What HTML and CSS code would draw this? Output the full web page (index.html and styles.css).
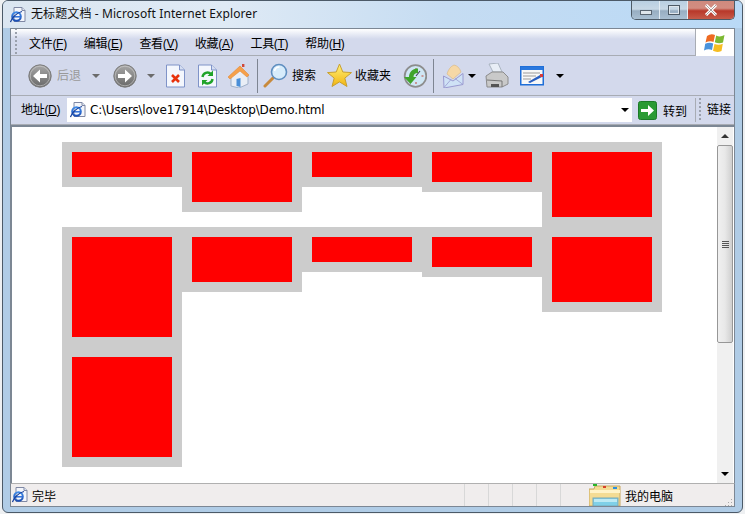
FILE: index.html
```html
<!DOCTYPE html>
<html lang="zh-CN">
<head>
  <meta charset="UTF-8" />
  <title>无标题文档 - Microsoft Internet Explorer</title>
  <link rel="stylesheet" href="styles.css">
</head>
<body>
  <svg class="defs" width="0" height="0">
    <defs>
      <linearGradient id="ball" x1="0" y1="0" x2="0" y2="1">
        <stop offset="0" stop-color="#a8a8a8"/><stop offset="1" stop-color="#686868"/>
      </linearGradient>
      <linearGradient id="iefill" x1="0" y1="0" x2="0" y2="1">
        <stop offset="0" stop-color="#3f8be8"/><stop offset="1" stop-color="#1c4fb4"/>
      </linearGradient>
      <symbol id="pageie" viewBox="0 0 16 16">
        <path d="M4 .5h8l3 3v11H4z" fill="#f4f6fb" stroke="#7f88a4"/>
        <path d="M12 .5v3h3" fill="#dfe5f2" stroke="#7f88a4"/>
        <circle cx="6.500" cy="9.500" r="4.300" fill="none" stroke="url(#iefill)" stroke-width="2"/>
        <path d="M2 9.800h9" stroke="#2f6fd8" stroke-width="1.500"/>
        <path d="M.5 15C1.500 11 7 5.500 12 4.500" fill="none" stroke="#17419c" stroke-width="1.200"/>
      </symbol>
      <symbol id="caret" viewBox="0 0 8 4"><path d="M0 0h8L4 4z"/></symbol>
      <symbol id="navball" viewBox="0 0 24 24">
        <circle cx="12" cy="12" r="11.200" fill="url(#ball)" stroke="#7c7c7c"/>
        <circle cx="12" cy="12" r="9.800" fill="none" stroke="#d0d0d0" stroke-opacity=".6"/>
      </symbol>
    </defs>
  </svg>

  <div class="window">
    <div class="titlebar">
      <svg class="title-icon" width="16" height="16"><use href="#pageie"/></svg>
      <span class="title-text">无标题文档 - Microsoft Internet Explorer</span>
      <div class="caption-btns">
        <div class="cap-btn cap-min"><i></i></div>
        <div class="cap-btn cap-max"><i></i></div>
        <div class="cap-btn cap-close">
          <svg width="14" height="12" viewBox="0 0 14 12"><path d="M2 1l10 10M12 1L2 11" stroke="#fff" stroke-width="3"/><path d="M2 1l10 10M12 1L2 11" stroke="#6b5a58" stroke-width=".6"/></svg>
        </div>
      </div>
    </div>

    <div class="chrome">
      <div class="menubar">
        <div class="menu-items">
          <span>文件(<u>F</u>)</span>
          <span>编辑(<u>E</u>)</span>
          <span>查看(<u>V</u>)</span>
          <span>收藏(<u>A</u>)</span>
          <span>工具(<u>T</u>)</span>
          <span>帮助(<u>H</u>)</span>
        </div>
        <div class="logo-cell">
          <svg width="22" height="20" viewBox="0 0 22 20">
            <path d="M3 3Q7 0 11 2L9.500 9Q6 7.500 1.500 9.500z" fill="#ee6a22"/>
            <path d="M12.200 2.500Q16 4.500 20.500 2L19 9.500Q15 11 10.800 9.300z" fill="#7cb932"/>
            <path d="M1.200 10.800Q5.500 8.800 9.200 10.500L8 17Q4 15.500 0 17.500z" fill="#4a93dc"/>
            <path d="M10.500 11Q15 12.500 18.800 10.800L17.500 18Q13 20 9 17.800z" fill="#f6bd22"/>
          </svg>
        </div>
      </div>

      <div class="toolbar">
        <svg class="tb-back" width="24" height="24" viewBox="0 0 24 24"><use href="#navball"/><path d="M19 10h-7V5.500L5 12l7 6.500V14h7z" fill="#fff"/></svg>
        <span class="tb-label tb-dim">后退</span>
        <svg class="tb-caret tb-caret-grey" width="8" height="4"><use href="#caret"/></svg>
        <svg class="tb-fwd" width="24" height="24" viewBox="0 0 24 24"><use href="#navball"/><path d="M5 10h7V5.500l7 6.500-7 6.500V14H5z" fill="#fff"/></svg>
        <svg class="tb-caret tb-caret-grey tb-caret-fwd" width="8" height="4"><use href="#caret"/></svg>

        <svg class="tb-stop" width="19" height="24" viewBox="0 0 19 24">
          <path d="M.5 1h13l5 5v17H.5z" fill="#f4f7fd" stroke="#7f93c8"/><path d="M13.500 1v5h5" fill="#d5def2" stroke="#7f93c8"/>
          <path d="M6 11l7 7M13 11l-7 7" stroke="#e8320c" stroke-width="2.600"/>
        </svg>
        <svg class="tb-refresh" width="19" height="24" viewBox="0 0 19 24">
          <path d="M.5 1h13l5 5v17H.5z" fill="#f4f7fd" stroke="#7f93c8"/><path d="M13.500 1v5h5" fill="#d5def2" stroke="#7f93c8"/>
          <path d="M4.500 13a5 5 0 0 1 8.500-3" fill="none" stroke="#1fa32a" stroke-width="2.400"/><path d="M15 6.500V12H9.500z" fill="#1fa32a"/>
          <path d="M14.500 15a5 5 0 0 1-8.500 3" fill="none" stroke="#1fa32a" stroke-width="2.400"/><path d="M4 21.500V16h5.500z" fill="#1fa32a"/>
        </svg>
        <svg class="tb-home" width="24" height="24" viewBox="0 0 24 24">
          <path d="M4 12v10l8 2 9-4v-9l-8-6z" fill="#e9eef6" stroke="#9fb0c8"/>
          <path d="M1 13L13 2l9 9-2 2-7-6-10 8z" fill="#f6a04a" stroke="#e08a38" stroke-width=".6"/>
          <rect x="15" y="0" width="2.400" height="3" fill="#d0483a"/>
          <path d="M9.500 15l4-1v9l-4-1z" fill="#4a8fd8"/>
        </svg>
        <span class="tb-sep"></span>
        <svg class="tb-search" width="25" height="25" viewBox="0 0 25 25">
          <path d="M2 23l8-8" stroke="#c88a3c" stroke-width="3" stroke-linecap="round"/>
          <circle cx="16" cy="9" r="7.500" fill="#d7ecfb" stroke="#5f8fc0" stroke-width="1.600"/>
          <path d="M11.500 8a5 5 0 0 1 5-4" fill="none" stroke="#fff" stroke-width="1.500"/>
        </svg>
        <span class="tb-label tb-search-label">搜索</span>
        <svg class="tb-star" width="25" height="25" viewBox="0 0 25 25">
          <defs><linearGradient id="star" x1="0" y1="0" x2="0" y2="1"><stop offset="0" stop-color="#fff27a"/><stop offset="1" stop-color="#f2b410"/></linearGradient></defs>
          <path d="M12.500 1l3.300 8 8.700.6-6.700 5.500 2.200 8.400-7.500-4.600-7.500 4.600 2.200-8.400L.5 9.600 9.200 9z" fill="url(#star)" stroke="#c8a030"/>
        </svg>
        <span class="tb-label tb-star-label">收藏夹</span>
        <svg class="tb-history" width="24" height="24" viewBox="0 0 24 24">
          <circle cx="12.500" cy="12" r="10.800" fill="#cfe6f4" stroke="#8d8d8d" stroke-width="1.800"/>
          <path d="M13 4v2M20.500 12h-2M13 20v-2" stroke="#c0483a"/>
          <path d="M13 12l4-5" stroke="#445" stroke-width="1.200"/>
          <path d="M6 13C6 8 10 4 15 4.500V9C12 9 10.500 10.500 10.500 13H13.500L7.500 20 1 13z" fill="#3fa52c"/>
        </svg>
        <span class="tb-sep tb-sep-2"></span>
        <svg class="tb-mail" width="21" height="24" viewBox="0 0 21 24">
          <path d="M4 10Q6 3 11 1Q16 2 18 8l-8 7z" fill="#f6d8a6" stroke="#d7b682" stroke-width=".6"/>
          <path d="M.5 12L10 17l10-7.500v11L1 24z" fill="#cfe2f6" stroke="#9a9ad0"/>
          <path d="M1 23.500l7-8M20 20.500l-8-6" stroke="#9a9ad0" stroke-width=".8"/>
        </svg>
        <svg class="tb-caret tb-caret-mail" width="8" height="4"><use href="#caret"/></svg>
        <svg class="tb-print" width="24" height="25" viewBox="0 0 24 25">
          <path d="M4 1l9-1 4 9H8z" fill="#e8eef6" stroke="#aab4c0"/>
          <path d="M1 13l6-4h11l5 5v7l-6 3H2z" fill="#c9c9c9" stroke="#8c8c8c"/>
          <path d="M2 17l15 1v6" fill="none" stroke="#777"/>
          <path d="M6 21h8v3H6z" fill="#555"/>
        </svg>
        <svg class="tb-edit" width="24" height="20" viewBox="0 0 24 20">
          <rect x=".75" y=".75" width="22.500" height="18" fill="#f8f8f8" stroke="#1f6fd8" stroke-width="1.500"/>
          <rect x="1" y="1" width="22" height="3" fill="#2a78de"/>
          <path d="M3 7h17M3 10h13M3 13h8" stroke="#9a9a9a"/>
          <path d="M8 16l12-7 2 2-12 6z" fill="#2a5fc0"/><rect x="20" y="8" width="3" height="3" fill="#d83a3a"/>
        </svg>
        <svg class="tb-caret tb-caret-edit" width="8" height="4"><use href="#caret"/></svg>
      </div>

      <div class="addressbar">
        <span class="addr-label">地址(<u>D</u>)</span>
        <div class="addr-field">
          <svg width="16" height="16"><use href="#pageie"/></svg>
          <span class="addr-url">C:\Users\love17914\Desktop\Demo.html</span>
          <svg class="addr-caret" width="8" height="4"><use href="#caret"/></svg>
        </div>
        <div class="addr-go">
          <svg width="19" height="19" viewBox="0 0 19 19">
            <rect x=".5" y=".5" width="18" height="18" rx="2" fill="#2a9a34" stroke="#1c7a28"/>
            <path d="M3 8h7V4l6 5.500-6 5.500v-4H3z" fill="#fff"/>
          </svg>
          <span>转到</span>
        </div>
        <div class="addr-links"><span>链接</span></div>
      </div>
    </div>

    <div class="viewport">
      <div class="page">
        <div class="box"><div class="fill h25"></div></div>
        <div class="box"><div class="fill h50"></div></div>
        <div class="box"><div class="fill h25"></div></div>
        <div class="box"><div class="fill h30"></div></div>
        <div class="box"><div class="fill h65"></div></div>
        <div class="box"><div class="fill h100"></div></div>
        <div class="box"><div class="fill h45"></div></div>
        <div class="box"><div class="fill h25"></div></div>
        <div class="box"><div class="fill h30"></div></div>
        <div class="box"><div class="fill h65"></div></div>
        <div class="box"><div class="fill h100"></div></div>
      </div>
      <div class="scrollbar">
        <div class="sb-btn"><svg width="8" height="4"><path d="M0 4h8L4 0z" fill="#333"/></svg></div>
        <div class="sb-thumb"><i></i><i></i><i></i><i></i></div>
        <div class="sb-track"></div>
        <div class="sb-btn"><svg width="8" height="4"><use href="#caret"/></svg></div>
      </div>
    </div>

    <div class="statusbar">
      <svg class="st-icon" width="16" height="16"><use href="#pageie"/></svg>
      <span class="st-text">完毕</span>
      <div class="st-cell"></div>
      <div class="st-cell"></div>
      <div class="st-cell"></div>
      <div class="st-cell"></div>
      <div class="st-cell st-last"></div>
      <svg class="st-folder" width="32" height="22" viewBox="0 0 32 22">
        <path d="M0 22V5h5l1-3h25v20z" fill="#f4dc94" stroke="#c8a860"/>
        <path d="M1 6h30v3H1z" fill="#fff3c8"/>
        <rect x="4" y="0" width="4" height="2" fill="#2ab52a"/><rect x="14" y="2" width="3" height="2" fill="#d8402a"/><rect x="24" y="3" width="4" height="2" fill="#2a90e0"/>
        <rect x="4" y="14" width="25" height="8" fill="#7fd0e8" stroke="#78a8b8"/>
        <path d="M5 15h23v3H5z" fill="#bdeaf4"/>
      </svg>
      <span class="st-zone">我的电脑</span>
      <svg class="st-grip" width="8" height="8" viewBox="0 0 8 8"><path d="M6 1h1v1H6zM3 4h1v1H3zM6 4h1v1H6zM0 7h1v1H0zM3 7h1v1H3zM6 7h1v1H6z" fill="#a8a8a8"/></svg>
    </div>
  </div>
</body>
</html>
```

FILE: styles.css
```css
* {
  box-sizing: border-box;
}
html, body {
  margin: 0;
  height: 100%;
}
body {
  background: #eef0f2;
  font-family: "Liberation Sans", "Noto Sans CJK SC", sans-serif;
  font-size: 12px;
  color: #000;
  overflow: hidden;
}
.defs {
  position: absolute;
}
.window {
  width: 741px;
  height: 513px;
  margin-left: 2px;
  padding: 0 7px 5px 7px;
  display: flex;
  flex-direction: column;
  background: #b0cce6;
  border: 1px solid #4c5a68;
  border-radius: 6px;
}

/* title bar */
.titlebar {
  height: 27px;
  margin: 0 -7px;
  padding-left: 7px;
  display: flex;
  align-items: flex-start;
  flex: none;
  border-radius: 5px 5px 0 0;
  background: linear-gradient(90deg, #dbe6f1 0%, #dfeaf5 30%, #c5dcf2 60%, #b9d9f6 100%);
}
.title-icon {
  margin-top: 6px;
}
.title-text {
  margin: 5px 0 0 5px;
  font-size: 12px;
  letter-spacing: .1px;
  line-height: 16px;
  color: #111;
  font-family: "Noto Sans", "Noto Sans CJK SC", sans-serif;
}
.caption-btns {
  margin-left: auto;
  margin-right: 7px;
  display: flex;
  height: 19px;
  border: 1px solid #4d5a66;
  border-top: none;
  border-radius: 0 0 5px 5px;
  overflow: hidden;
}
.cap-btn {
  display: flex;
  align-items: center;
  justify-content: center;
  width: 28px;
  background: linear-gradient(#b9cfe2 0%, #c8d8e6 45%, #98aec2 55%, #a9bfd2 100%);
  border-right: 1px solid #e4edf4;
}
.cap-close {
  width: 46px;
  border-right: none;
  background: linear-gradient(#cf8a7e 0%, #d28c80 40%, #b8382a 55%, #c65a48 100%);
}
.cap-min i {
  display: block;
  width: 12px;
  height: 5px;
  margin-top: 4px;
  background: #dfe6ec;
  border: 1px solid #5a6672;
}
.cap-max i {
  display: block;
  width: 12px;
  height: 10px;
  border: 1px solid #4d5a66;
  outline: 1px solid #dfe6ec;
  outline-offset: -2px;
}

/* menu, toolbar and address rows */
.chrome {
  flex: none;
  border: 1px solid #7c8794;
  border-bottom: none;
  background: #d3d9ec;
}
.menubar {
  height: 27px;
  display: flex;
  background: linear-gradient(#ffffff 0, #d3d9ec 10px);
  border-bottom: 1px solid #a8acb4;
}
.menu-items {
  flex: 1;
  display: flex;
  align-items: center;
  gap: 17px;
  padding-left: 18px;
  padding-top: 1px;
  letter-spacing: -.3px;
  background-image: linear-gradient(#9aa0ac 50%, transparent 50%);
  background-size: 2px 4px;
  background-position: 4px 3px;
  background-repeat: repeat-y;
}
.logo-cell {
  width: 39px;
  display: flex;
  align-items: center;
  justify-content: center;
  background: #fff;
  border-left: 1px solid #a8acb4;
  margin-bottom: -1px;
}
.toolbar {
  height: 40px;
  display: flex;
  align-items: center;
  border-bottom: 1px solid #a8acb4;
  padding-left: 17px;
}
.tb-label {
  line-height: 16px;
}
.tb-dim {
  color: #9a9a9a;
  margin-left: 5px;
}
.tb-caret {
  flex: none;
}
.tb-caret-grey {
  fill: #6b6b6b;
  margin-left: 11px;
}
.tb-fwd {
  margin-left: 13px;
}
.tb-caret-fwd {
  margin-left: 10px;
}
.tb-stop {
  margin-left: 11px;
}
.tb-refresh {
  margin-left: 13px;
}
.tb-home {
  margin-left: 10px;
}
.tb-sep {
  width: 1px;
  height: 34px;
  margin-left: 6px;
  background: #7e8592;
}
.tb-search {
  margin-left: 5px;
}
.tb-search-label {
  margin-left: 4px;
}
.tb-star {
  margin-left: 11px;
}
.tb-star-label {
  margin-left: 3px;
}
.tb-history {
  margin-left: 12px;
}
.tb-sep-2 {
  margin-left: 6px;
}
.tb-mail {
  margin-left: 9px;
}
.tb-caret-mail {
  margin-left: 4px;
}
.tb-print {
  margin-left: 9px;
}
.tb-edit {
  margin-left: 11px;
}
.tb-caret-edit {
  margin-left: 12px;
}

.addressbar {
  height: 29px;
  display: flex;
  align-items: stretch;
  padding-top: 2px;
  padding-bottom: 2px;
  border-bottom: 1px solid #a8acb4;
}
.addr-label {
  width: 56px;
  padding-left: 10px;
  line-height: 24px;
  letter-spacing: -.3px;
}
.addr-field {
  width: 565px;
  display: flex;
  align-items: center;
  background: #fff;
  padding-left: 3px;
}
.addr-url {
  margin-left: 4px;
  font-family: "DejaVu Sans", sans-serif;
  font-size: 12px;
  letter-spacing: -.2px;
}
.addr-caret {
  margin-left: auto;
  margin-right: 3px;
}
.addr-go {
  width: 64px;
  display: flex;
  align-items: center;
  gap: 6px;
  padding-left: 6px;
  border-right: 1px solid #a8acb4;
}
.addr-links {
  flex: 1;
  padding-left: 11px;
  line-height: 24px;
  background-image: linear-gradient(#9aa0ac 50%, transparent 50%);
  background-size: 2px 4px;
  background-position: 3px 0;
  background-repeat: repeat-y;
}

/* page area */
.viewport {
  flex: 1;
  min-height: 0;
  display: flex;
  justify-content: space-between;
  background: #fff;
  border-top: 2px solid #7c8794;
  border-left: 2px solid #7c8794;
  border-right: 1px solid #7c8794;
  border-bottom: 1px solid #b0b0b0;
}
.page {
  flex: none;
  width: 650px;
  padding: 15px 0 0 50px;
  display: flex;
  flex-wrap: wrap;
  align-items: flex-start;
  align-content: flex-start;
}
.box {
  width: 120px;
  padding: 10px;
  background: #ccc;
}
.fill {
  background: #f00;
}
.h25 { height: 25px; }
.h30 { height: 30px; }
.h45 { height: 45px; }
.h50 { height: 50px; }
.h65 { height: 65px; }
.h100 { height: 100px; }
.scrollbar {
  width: 17px;
  display: flex;
  flex-direction: column;
  background: #fff;
  padding-right: 1px;
}
.sb-btn {
  height: 18px;
  flex: none;
  display: flex;
  align-items: center;
  justify-content: center;
  background: #f0f0f0;
}
.sb-thumb {
  height: 198px;
  flex: none;
  display: flex;
  flex-direction: column;
  align-items: center;
  justify-content: center;
  gap: 1px;
  background: linear-gradient(90deg, #f0f0f0 0%, #e8e8e8 50%, #cfcfcf 100%);
  border: 1px solid #979797;
  border-radius: 2px;
}
.sb-thumb i {
  display: block;
  width: 7px;
  height: 1px;
  background: #555;
}
.sb-track {
  flex: 1;
  background: #f0f0f0;
}

/* status bar */
.statusbar {
  height: 23px;
  flex: none;
  display: flex;
  align-items: center;
  background: #f0eded;
  border-left: 1px solid #7c8794;
  border-right: 1px solid #7c8794;
  border-bottom: 1px solid #7c8794;
  padding-left: 1px;
}
.st-text {
  margin-left: 4px;
  width: 432px;
}
.st-cell {
  width: 24px;
  height: 22px;
  border-left: 1px solid #d8d8d8;
}
.st-last {
  width: 29px;
}
.st-folder {
  align-self: flex-end;
}
.st-zone {
  margin-left: 4px;
}
.st-grip {
  margin-left: auto;
  margin-right: 1px;
  align-self: flex-end;
}
```
